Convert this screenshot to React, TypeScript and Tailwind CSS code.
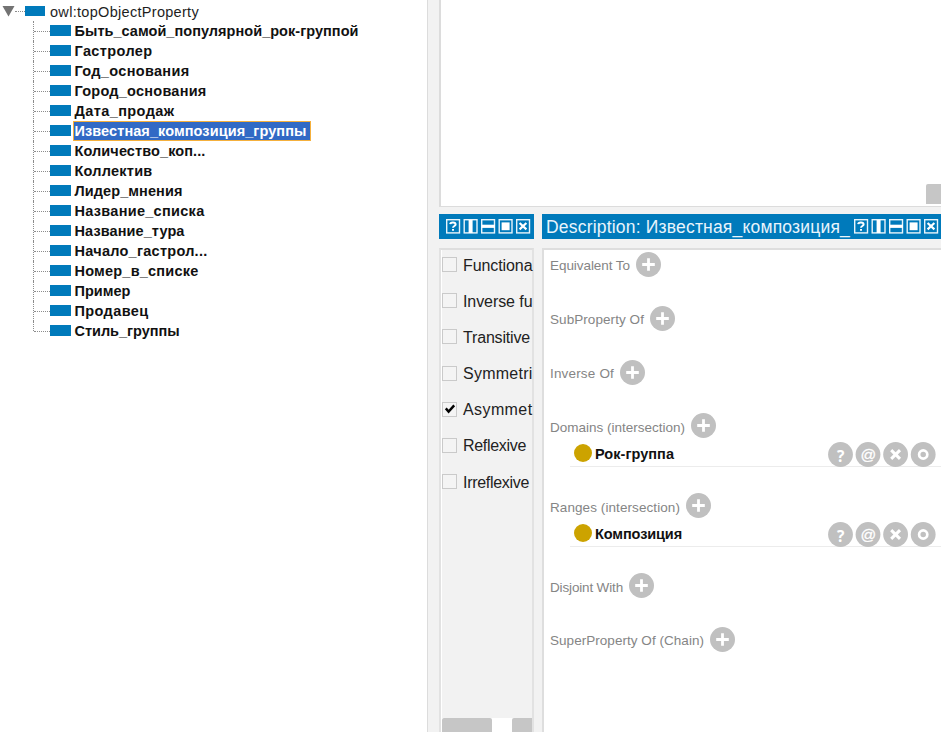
import { useLayoutEffect, useRef } from "react";
import clsx from "clsx";

// Single-line text whose tracking is tuned so that it spans `width` pixels.
function Fit({ text, width, className }: { text: string; width: number; className?: string }) {
  const ref = useRef<HTMLSpanElement>(null);
  useLayoutEffect(() => {
    const el = ref.current;
    if (!el) return;
    el.style.letterSpacing = "0px";
    const natural = el.getBoundingClientRect().width;
    el.style.letterSpacing = `${(width - natural) / text.length}px`;
  }, [text, width]);
  return (
    <span ref={ref} className={clsx("inline-block shrink-0 whitespace-nowrap", className)}>
      {text}
    </span>
  );
}

const properties: [string, number][] = [
  ["Быть_самой_популярной_рок-группой", 284],
  ["Гастролер", 78],
  ["Год_основания", 115],
  ["Город_основания", 132],
  ["Дата_продаж", 100],
  ["Известная_композиция_группы", 232],
  ["Количество_коп...", 131],
  ["Коллектив", 78],
  ["Лидер_мнения", 108],
  ["Название_списка", 130],
  ["Название_тура", 110],
  ["Начало_гастрол...", 133],
  ["Номер_в_списке", 124],
  ["Пример", 56],
  ["Продавец", 74],
  ["Стиль_группы", 105],
];
const selected = "Известная_композиция_группы";

function Tree() {
  return (
    <div className="h-full w-[427px] shrink-0 bg-white pt-[1px] text-[14.5px] leading-5">
      <div className="flex h-5 items-center">
        <svg className="ml-[2px] h-3 w-[13px]" viewBox="0 0 13 12">
          <path d="M0.5 1H12.5L6.5 11.5Z" fill="#737373" />
        </svg>
        <span className="w-[10px] border-t border-dotted border-[#8c8c8c]" />
        <span className="h-[10.5px] w-5 bg-[#007abb]" />
        <Fit text="owl:topObjectProperty" width={149} className="ml-[5px] pt-px text-[#1e1e1e]" />
      </div>
      {properties.map(([name, width], i) => (
        <div key={name} className="flex h-5 items-center pl-[33px]">
          <span
            className={clsx(
              "border-l border-dotted border-[#8c8c8c]",
              i === properties.length - 1 ? "h-[10px] self-start" : "h-5",
            )}
          />
          <span className="w-4 border-t border-dotted border-[#8c8c8c]" />
          <span className="mb-px h-[11px] w-[20.5px] bg-[#007abb]" />
          <span
            className={clsx(
              "ml-[2px] flex h-5 items-center border pl-[1px] pr-[3px] font-bold",
              name === selected ? "border-[#f5b03c] bg-[#316ac5] text-white" : "border-transparent text-[#111]",
            )}
          >
            <Fit text={name} width={width} className="pt-px leading-[17px]" />
          </span>
        </div>
      ))}
    </div>
  );
}

function ViewIcons({ className }: { className?: string }) {
  return (
    <svg className={clsx("h-[15px] w-[85px] shrink-0", className)} viewBox="0 0 85 15" fill="none" stroke="#e8f4fb" strokeWidth="1.4">
      {[0, 17.5, 35, 52.5, 70].map((x) => (
        <rect key={x} x={x + 0.7} y="0.7" width="12.8" height="13.2" />
      ))}
      <path d="M4.2 5.2C4.4 2.9 9.6 2.9 9.6 5.4C9.6 7.1 7 6.9 7 8.8M7 10V11.8" stroke="#fff" strokeWidth="2" />
      <path d="M24.6 1V14" stroke="#fff" strokeWidth="4" />
      <path d="M35.5 7.3H49" stroke="#fff" strokeWidth="3.2" />
      <rect x="55.6" y="3.4" width="8" height="7.8" fill="#fff" stroke="none" />
      <path d="M73.6 4L80.4 10.4M80.4 4L73.6 10.4" stroke="#fff" strokeWidth="2.2" />
    </svg>
  );
}

const characteristics: [string, number][] = [
  ["Functiona", 69.5],
  ["Inverse fu", 69.5],
  ["Transitive", 67],
  ["Symmetri", 69.5],
  ["Asymmet", 69.5],
  ["Reflexive", 63],
  ["Irreflexive", 66],
];

function Characteristics() {
  return (
    <div className="flex w-[95px] shrink-0 flex-col">
      <div className="flex h-[25px] items-center bg-[#007abb] pl-[7px]">
        <ViewIcons />
      </div>
      <div className="mt-[9px] flex flex-1 flex-col border-2 border-b-0 border-[#e2e2e2] border-t-[#dedede] bg-[#f2f2f2]">
        <div className="flex flex-1 flex-col border-l border-white">
          {characteristics.map(([name, width]) => (
            <div key={name} className="flex h-[36.2px] shrink-0 items-start">
              <span className="mt-[7px] flex size-[15px] shrink-0 items-center justify-center border border-[#cacaca] bg-[#f4f4f4]">
                {name === "Asymmet" && (
                  <svg viewBox="0 0 12 12" className="size-3" fill="none" stroke="#000" strokeWidth="2.4">
                    <path d="M1.8 5.4L4.6 8.6L10.2 2.4" />
                  </svg>
                )}
              </span>
              <Fit text={name} width={width} className="ml-[6px] mt-[5.5px] text-[16px] leading-5 text-[#222]" />
            </div>
          ))}
        </div>
        <div className="flex h-[14px] justify-between bg-white pl-[1px]">
          <span className="w-[50px] rounded-t-[2px] bg-[#c6c6c6]" />
          <span className="w-5 rounded-tl-[2px] bg-[#c6c6c6]" />
        </div>
      </div>
    </div>
  );
}

function Plus() {
  return (
    <svg className="ml-[6px] size-[25px] shrink-0" viewBox="0 0 25 25">
      <circle cx="12.5" cy="12.5" r="12.5" fill="#c0c0c0" />
      <path d="M12.5 6.2V18.8M6.2 12.5H18.8" stroke="#fff" strokeWidth="2.8" />
    </svg>
  );
}

function Actions() {
  return (
    <svg className="h-[25px] w-[108px] shrink-0" viewBox="0 0 108 25" fill="none" stroke="#fff">
      {[12.5, 40, 67.6, 95.2].map((x) => (
        <circle key={x} cx={x} cy="12.5" r="12.4" fill="#c0c0c0" stroke="none" />
      ))}
      <text x="12.7" y="19.6" textAnchor="middle" fill="#fff" stroke="none" className="font-['Open_Sans'] text-[15.5px] font-bold">?</text>
      <text x="40" y="17.6" textAnchor="middle" fill="#fff" strokeWidth="0.3" className="font-['Liberation_Sans'] text-[15.5px] italic">@</text>
      <path d="M63.2 8.1L72 16.9M72 8.1L63.2 16.9" strokeWidth="3" />
      <circle cx="95.2" cy="12.5" r="4.1" strokeWidth="2.7" />
    </svg>
  );
}

const sections: { label: string; width: number; item?: string; itemWidth?: number }[] = [
  { label: "Equivalent To", width: 80 },
  { label: "SubProperty Of", width: 94 },
  { label: "Inverse Of", width: 64 },
  { label: "Domains (intersection)", width: 135, item: "Рок-группа", itemWidth: 79 },
  { label: "Ranges (intersection)", width: 130, item: "Композиция", itemWidth: 87 },
  { label: "Disjoint With", width: 73 },
  { label: "SuperProperty Of (Chain)", width: 154 },
];

function Description() {
  return (
    <div className="ml-2 flex min-w-0 flex-1 flex-col">
      <div className="flex h-[25px] items-center bg-[#007abb] pl-1">
        <Fit text="Description: Известная_композиция_" width={304} className="pt-px text-[17.5px] leading-[25px] text-[#e8f4fb]" />
        <ViewIcons className="ml-[4px]" />
      </div>
      <div className="mt-[9px] flex-1 border-l-2 border-t-2 border-[#dedede] bg-white pt-[2px]">
        {sections.map((s) => (
          <div key={s.label} className={s.item ? "h-[80px]" : "h-[53.8px]"}>
            <div className="flex h-[25px] items-center pl-[6px]">
              <Fit text={s.label} width={s.width} className="pt-[3.5px] text-[13.5px] leading-5 text-[#858585]" />
              <Plus />
            </div>
            {s.item && s.itemWidth && (
              <div className="ml-[26px] mt-[3px] flex h-[26px] items-center border-b border-[#ececec] pl-[4px]">
                <span className="mb-[2px] size-[18px] shrink-0 rounded-full bg-[#cca300]" />
                <Fit text={s.item} width={s.itemWidth} className="ml-[3px] pt-px text-[14.5px] font-bold leading-5 text-[#111]" />
                <span className="ml-auto mr-[5px] flex pt-[1px]">
                  <Actions />
                </span>
              </div>
            )}
          </div>
        ))}
      </div>
    </div>
  );
}

export default function App() {
  return (
    <div className="flex h-[732px] w-[941px] overflow-hidden bg-[#f2f2f2] font-['Liberation_Sans',Arial,sans-serif]">
      <Tree />
      <div className="flex min-w-0 flex-1 flex-col border-l border-[#dcdcdc] pl-[11px]">
        <div className="flex h-[207px] shrink-0 items-end justify-end border-b border-l-2 border-[#dcdcdc] bg-white">
          <span className="mb-[2px] h-5 w-[15px] rounded-tl-[2px] bg-[#c6c6c6]" />
        </div>
        <div className="mt-[7px] flex min-h-0 flex-1">
          <Characteristics />
          <Description />
        </div>
      </div>
    </div>
  );
}
